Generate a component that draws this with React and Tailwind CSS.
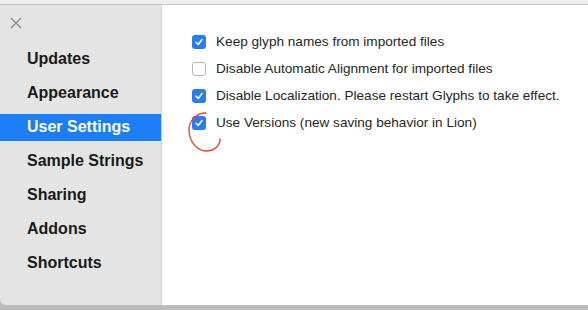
import React from "react";

const navItems = [
  "Updates",
  "Appearance",
  "User Settings",
  "Sample Strings",
  "Sharing",
  "Addons",
  "Shortcuts",
];

const options = [
  { label: "Keep glyph names from imported files", checked: true },
  { label: "Disable Automatic Alignment for imported files", checked: false },
  { label: "Disable Localization. Please restart Glyphs to take effect.", checked: true },
  { label: "Use Versions (new saving behavior in Lion)", checked: true },
];

const Checkbox = ({ checked }) =>
  checked ? (
    <span className="flex h-[14px] w-[14px] shrink-0 items-center justify-center rounded-[3px] bg-[#2a7cf2]">
      <svg width="10" height="10" viewBox="0 0 10 10" fill="none">
        <path d="M2 5.2 L4.2 7.4 L8 2.6" stroke="white" strokeWidth="1.6" strokeLinecap="round" strokeLinejoin="round" />
      </svg>
    </span>
  ) : (
    <span className="h-[14px] w-[14px] shrink-0 rounded-[3px] border border-[#b5b5b5] bg-white" />
  );

const App = () => {
  return (
    <div className="flex h-[310px] w-[588px] flex-col overflow-hidden bg-[#bdbdbd] font-['Liberation_Sans',sans-serif]">
      {/* background window strip */}
      <div className="h-[5px] shrink-0 border-b border-[#c4c4c4] bg-[#efefef]" />

      <div className="relative flex h-[300px] shrink-0 overflow-hidden rounded-bl-[6px]">
        {/* sidebar */}
        <div className="flex w-[162px] shrink-0 flex-col border-r border-[#d2d2d2] bg-[#e4e4e4]">
          <div className="pl-[10px] pt-[12px]">
            <svg width="12" height="12" viewBox="0 0 12 12">
              <path d="M1 1 L11 11 M11 1 L1 11" stroke="#8a8a8a" strokeWidth="1.4" />
            </svg>
          </div>
          <div className="mt-[13px] flex flex-col">
            {navItems.map((item) => (
              <div
                key={item}
                className={`flex items-center pl-[27px] text-[16px] font-bold ${
                  item === "User Settings"
                    ? "my-[3.5px] h-[27px] bg-[#1b7ef7] text-white"
                    : "h-[34px] text-[#1a1a1a]"
                }`}
              >
                {item}
              </div>
            ))}
          </div>
        </div>

        {/* content */}
        <div className="flex flex-1 flex-col gap-[13px] bg-white pl-[30px] pt-[30px]">
          {options.map((opt) => (
            <div key={opt.label} className="flex h-[14px] items-center gap-[10px] text-[13.6px] text-[#262626]">
              <Checkbox checked={opt.checked} />
              <span>{opt.label}</span>
            </div>
          ))}
        </div>

        {/* red annotation circle */}
        <svg className="absolute left-[184px] top-[98px]" width="42" height="52" viewBox="0 0 42 52" fill="none">
          <path
            d="M22 10 C12 10 5 18 5 27 C5 38 13 48 22 48 C30 48 36 43 36 36"
            stroke="#e2472f"
            strokeWidth="1.4"
            strokeLinecap="round"
          />
        </svg>
      </div>

      {/* background window strip */}
      <div className="h-[5px] shrink-0 bg-[#bcbcbc]" />
    </div>
  );
};

export default App;
